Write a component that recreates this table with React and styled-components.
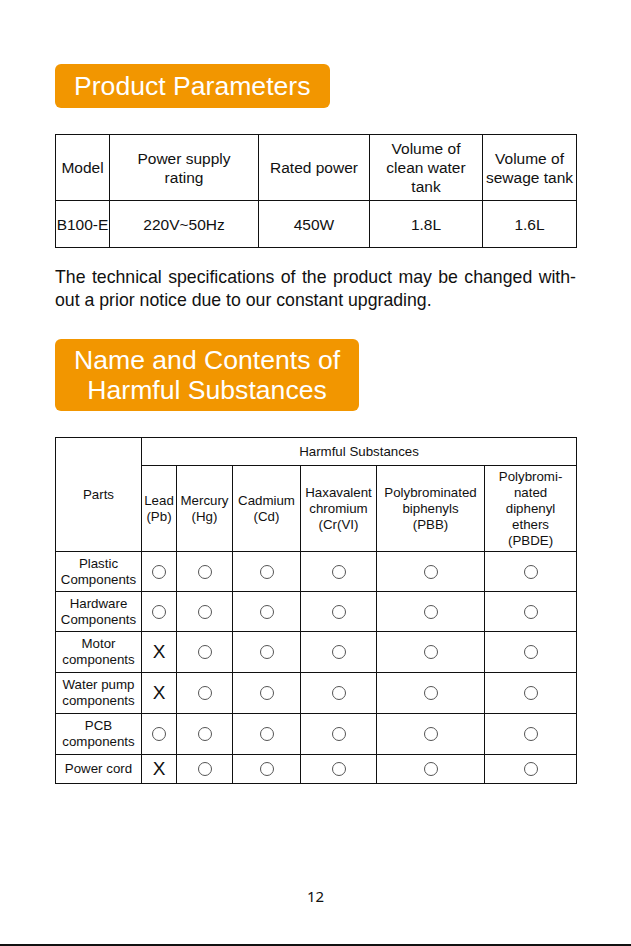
import React from "react";
import styled, { createGlobalStyle } from "styled-components";

const GlobalStyle = createGlobalStyle`
  html, body {
    margin: 0;
    padding: 0;
    background: #ffffff;
  }
  body {
    font-family: "Liberation Sans", Arial, sans-serif;
    color: #111111;
  }
`;

const Page = styled.div`
  width: 631px;
  min-height: 946px;
  box-sizing: border-box;
  display: flex;
  flex-direction: column;
  border-bottom: 2px solid #111;
`;

const Content = styled.div`
  padding: 64px 55px 0;
  display: flex;
  flex-direction: column;
  align-items: flex-start;
`;

const Badge = styled.h2`
  margin: 0;
  background: #f29600;
  color: #ffffff;
  font-weight: 400;
  font-size: 26.6px;
  line-height: ${(p) => p.$lineHeight || 32}px;
  padding: 6px 19px;
  border-radius: 6px;
  text-align: center;
  margin-top: ${(p) => p.$top || 0}px;
`;

const Table = styled.table`
  width: 100%;
  table-layout: fixed;
  border-collapse: collapse;
  margin-top: ${(p) => p.$top || 0}px;
  font-size: ${(p) => (p.$small ? "13.3px" : "15.5px")};
  line-height: ${(p) => (p.$small ? "16px" : "19px")};
  color: #111;
`;

const Col = styled.col`
  width: ${(p) => p.$w}px;
`;

const Row = styled.tr`
  height: ${(p) => p.$h}px;
`;

const Cell = styled.td`
  border: 1px solid #111;
  text-align: center;
  vertical-align: middle;
  padding: 0;
  font-weight: 400;
  white-space: nowrap;
`;

const Note = styled.p`
  margin: 18px 0 0;
  width: 100%;
  font-size: 17.7px;
  line-height: 23px;
`;

const JustLine = styled.span`
  display: block;
  text-align: justify;
  text-align-last: justify;
`;

const Circle = styled.span`
  display: inline-block;
  width: 14px;
  height: 14px;
  box-sizing: border-box;
  border: 1px solid #555;
  border-radius: 50%;
  vertical-align: middle;
`;

const Cross = styled.span`
  font-size: 19px;
  line-height: 18px;
  vertical-align: middle;
`;

const Footer = styled.div`
  margin-top: auto;
  padding-bottom: 38px;
  text-align: center;
  font-family: "Noto Sans", "DejaVu Sans", sans-serif;
  font-size: 15px;
  line-height: 20px;
`;

const parts = [
  { name: ["Plastic", "Components"], lead: false, h: 40 },
  { name: ["Hardware", "Components"], lead: false, h: 40 },
  { name: ["Motor", "components"], lead: true, h: 41 },
  { name: ["Water pump", "components"], lead: true, h: 41 },
  { name: ["PCB", "components"], lead: false, h: 41 },
  { name: ["Power cord"], lead: true, h: 29 },
];

const Mark = ({ cross }) => (cross ? <Cross>X</Cross> : <Circle />);

export default function App() {
  return (
    <Page>
      <GlobalStyle />
      <Content>
        <Badge>Product Parameters</Badge>

        <Table $top={26}>
          <colgroup>
            <Col $w={54} />
            <Col $w={149} />
            <Col $w={111} />
            <Col $w={113} />
            <Col $w={94} />
          </colgroup>
          <tbody>
            <Row $h={66}>
              <Cell>Model</Cell>
              <Cell>
                Power supply
                <br />
                rating
              </Cell>
              <Cell>Rated power</Cell>
              <Cell>
                Volume of
                <br />
                clean water
                <br />
                tank
              </Cell>
              <Cell>
                Volume of
                <br />
                sewage tank
              </Cell>
            </Row>
            <Row $h={47}>
              <Cell>B100-E</Cell>
              <Cell>220V~50Hz</Cell>
              <Cell>450W</Cell>
              <Cell>1.8L</Cell>
              <Cell>1.6L</Cell>
            </Row>
          </tbody>
        </Table>

        <Note>
          <JustLine>
            The technical specifications of the product may be changed with-
          </JustLine>
          out a prior notice due to our constant upgrading.
        </Note>

        <Badge $top={27} $lineHeight={30}>
          Name and Contents of
          <br />
          Harmful Substances
        </Badge>

        <Table $top={26} $small>
          <colgroup>
            <Col $w={86} />
            <Col $w={35} />
            <Col $w={56} />
            <Col $w={68} />
            <Col $w={76} />
            <Col $w={108} />
            <Col $w={92} />
          </colgroup>
          <tbody>
            <Row $h={28}>
              <Cell rowSpan={2}>Parts</Cell>
              <Cell colSpan={6}>Harmful Substances</Cell>
            </Row>
            <Row $h={86}>
              <Cell>
                Lead
                <br />
                (Pb)
              </Cell>
              <Cell>
                Mercury
                <br />
                (Hg)
              </Cell>
              <Cell>
                Cadmium
                <br />
                (Cd)
              </Cell>
              <Cell>
                Haxavalent
                <br />
                chromium
                <br />
                (Cr(VI)
              </Cell>
              <Cell>
                Polybrominated
                <br />
                biphenyls
                <br />
                (PBB)
              </Cell>
              <Cell>
                Polybromi-
                <br />
                nated
                <br />
                diphenyl
                <br />
                ethers
                <br />
                (PBDE)
              </Cell>
            </Row>
            {parts.map((p) => (
              <Row $h={p.h} key={p.name.join(" ")}>
                <Cell>
                  {p.name.map((line, i) => (
                    <React.Fragment key={line}>
                      {i > 0 && <br />}
                      {line}
                    </React.Fragment>
                  ))}
                </Cell>
                <Cell>
                  <Mark cross={p.lead} />
                </Cell>
                {[0, 1, 2, 3, 4].map((i) => (
                  <Cell key={i}>
                    <Mark />
                  </Cell>
                ))}
              </Row>
            ))}
          </tbody>
        </Table>
      </Content>
      <Footer>12</Footer>
    </Page>
  );
}
